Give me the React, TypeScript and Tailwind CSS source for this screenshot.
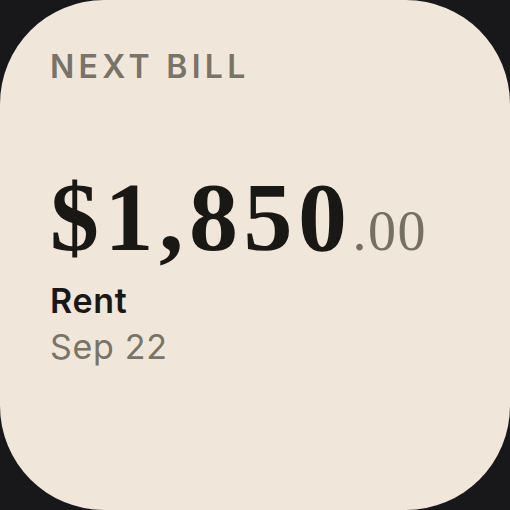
export default function App() {
  return (
    <div className="w-[510px] h-[510px] bg-[#18181b]">
      <div className="w-full h-full bg-[#f0e7da] rounded-[104px] pl-[50px] pt-[51px] flex flex-col">
        <div
          className="text-[32px] leading-none font-semibold tracking-[0.135em] text-[#7a7367]"
          style={{ fontFamily: "Inter, sans-serif" }}
        >
          NEXT BILL
        </div>
        <div
          className="mt-[85px] flex items-baseline leading-none text-[#1a1814]"
          style={{ fontFamily: '"Liberation Serif", serif' }}
        >
          <span className="text-[98px] font-bold tracking-[5.5px]">$1,850</span>
          <span className="text-[56px] tracking-[1.5px] text-[#766f64]">.00</span>
        </div>
        <div
          className="mt-[12px] flex flex-col"
          style={{ fontFamily: "Inter, sans-serif" }}
        >
          <span className="text-[34px] leading-[46px] font-semibold tracking-[0.02em] text-[#1a1814]">Rent</span>
          <span className="text-[34px] leading-[46px] tracking-[0.02em] text-[#7a7367]">Sep 22</span>
        </div>
      </div>
    </div>
  );
}
